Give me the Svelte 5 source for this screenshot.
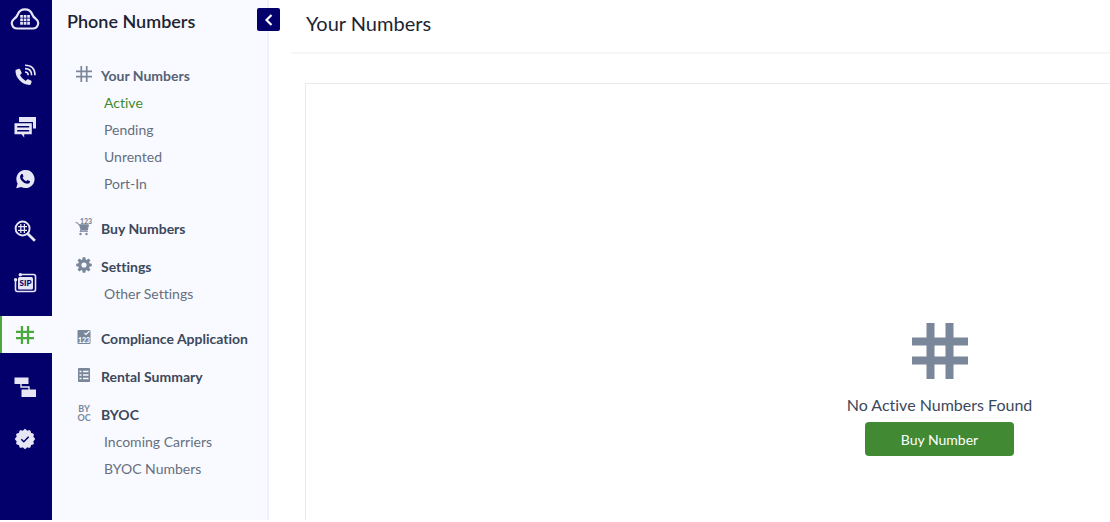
<script>
	let collapsed = $state(false);

	const rail = [
		{ icon: "voice", label: "Voice" },
		{ icon: "messaging", label: "Messaging" },
		{ icon: "whatsapp", label: "WhatsApp" },
		{ icon: "lookup", label: "Lookup" },
		{ icon: "sip", label: "SIP Trunking" },
		{ icon: "hash", label: "Phone Numbers", active: true },
		{ icon: "flow", label: "PHLO" },
		{ icon: "verify", label: "Verify" },
	];

	const menu = [
		{ icon: "hash", label: "Your Numbers", light: true, items: ["Active", "Pending", "Unrented", "Port-In"] },
		{ icon: "cart", label: "Buy Numbers", items: [] },
		{ icon: "gear", label: "Settings", items: ["Other Settings"] },
		{ icon: "compliance", label: "Compliance Application", items: [] },
		{ icon: "table", label: "Rental Summary", items: [] },
		{ icon: "byoc", label: "BYOC", items: ["Incoming Carriers", "BYOC Numbers"] },
	];

	let current = $state("Active");

	// scalloped badge outline, 12 bumps
	const badge = Array.from({ length: 48 }, (_, i) => {
		const a = (i / 48) * Math.PI * 2;
		const r = 9.4 + 0.8 * Math.cos(a * 12);
		return `${(12 + r * Math.cos(a)).toFixed(2)},${(12 + r * Math.sin(a)).toFixed(2)}`;
	}).join(" ");
</script>

{#snippet hash(size, w)}
	<svg width={size} height={size} viewBox="0 0 56 56" fill="none" stroke="currentColor" stroke-width={w} aria-hidden="true">
		<path d="M18.5 0v56M37.5 0v56M0 18.5h56M0 37.5h56" />
	</svg>
{/snippet}

{#snippet railIcon(name)}
	{#if name == "hash"}
		{@render hash(18, 7)}
	{:else}
		<svg width="24" height="24" viewBox="0 0 24 24" fill="currentColor" aria-hidden="true">
			{#if name == "voice"}
				<path d="M3.3 6.7 5.8 5.8q.9-.2 1.3.6l1.5 3.2q.3.7-.3 1.3L6.9 12.1q2 4 5.8 5.9l1.3-1.5q.6-.5 1.3-.2l2.6 1.3q.9.5.7 1.3l-.7 2.2q-.3.9-1.3.9Q10.600 21.600 6.500 17.200 2.400 12.900 2.500 7.700q0-.8.8-1z" />
				<path d="M12 2.200q10 0 10 10M12 5.600q6.600 0 6.600 6.600M12 9q3.200 0 3.200 3.200" fill="none" stroke="currentColor" stroke-width="1.600" />
			{:else if name == "messaging"}
				<path d="M6 2h17v11.400h-3V7H6z" />
				<path fill-rule="evenodd" d="M1.500 8.200h17.300v11h-7.600v3.200L8.500 19.200h-7zM4.200 11v1.400h12V11zm0 4v1.400h12V15z" />
			{:else if name == "whatsapp"}
				<path d="M3.200 21.300 4.600 16.600A9.100 9.100 0 1 1 8.100 20z" />
				<path class="cut" d="m8.400 7.100 1.200-.1.9 2.500-1 1.200q1.300 2.500 3.800 3.600l1.200-1.300 2.500 1.300q.1 2.500-2.800 2.500-3.300-.3-5.700-3.400Q5.600 10 8.400 7.100z" />
			{:else if name == "lookup"}
				<circle cx="9.600" cy="9.500" r="7" fill="none" stroke="currentColor" stroke-width="1.900" />
				<path d="M7.800 5v9M11.400 5v9M5 7.700h9M5 11.300h9" stroke="currentColor" stroke-width="1.300" />
				<path d="m14.700 14.700 7.200 7" stroke="currentColor" stroke-width="2.700" />
			{:else if name == "sip"}
				<path d="M7 3.500h13.500q2 0 2 2V18.500q0 2-2 2H4.500q-2 0-2-2V8.500" fill="none" stroke="currentColor" stroke-width="1.600" />
				<circle cx="7.300" cy="3.700" r="1.700" />
				<circle cx="2.600" cy="8.800" r="1.700" />
				<rect x="5" y="6" width="15" height="12.500" rx="1.500" />
				<text class="cut sip" x="12.500" y="15" text-anchor="middle">SIP</text>
			{:else if name == "flow"}
				<path d="M1.500 2.500H15.500v6.500H1.500zM8.500 14.500h14.500v7.500h-14.500z" />
				<path d="M8 9v3h8v3" fill="none" stroke="currentColor" stroke-width="1.400" />
			{:else if name == "verify"}
				<polygon points={badge} />
				<path class="tick" d="m8.300 12.200 2.500 2.500 4.900-5" />
			{/if}
		</svg>
	{/if}
{/snippet}

{#snippet menuIcon(name)}
	{#if name == "hash"}
		{@render hash(16, 6)}
	{:else if name == "cart"}
		<svg width="18" height="22" viewBox="0 0 18 22" fill="currentColor" aria-hidden="true">
			<text class="num" x="5" y="7.500">123</text>
			<path d="M.5 6.800h2.300l.9 2H13.500l-1.200 5.300H5.700L5 15.300h8" fill="none" stroke="currentColor" />
			<path d="M4 8.800h9.300l-1 5.200H5.600z" />
			<circle cx="5.500" cy="18" r="1.200" />
			<circle cx="11.500" cy="18" r="1.200" />
		</svg>
	{:else}
		<svg width="18" height="18" viewBox="0 0 18 18" fill="currentColor" aria-hidden="true">
			{#if name == "gear"}
				<circle cx="9" cy="9" r="4.200" fill="none" stroke="currentColor" stroke-width="3.200" />
				{#each [0, 45, 90, 135, 180, 225, 270, 315] as angle}
					<path d="m7.200 4 .5-2.800h2.600l.5 2.800z" transform="rotate({angle} 9 9)" />
				{/each}
			{:else if name == "compliance"}
				<rect x="2.500" y="2" width="13" height="14" rx="1" />
				<path d="m9.500 5 1.500 1.500 3.500-3.500" fill="none" stroke="#f9faff" stroke-width="1.200" />
				<text class="num pale" x="9" y="14.500" text-anchor="middle">123</text>
			{:else if name == "table"}
				<rect x="3" y="2" width="12" height="14" rx="1" />
				<path d="M4.500 5.500h2M8 5.500h5.500M4.500 9h2M8 9h5.500M4.500 12.500h2M8 12.500h5.500" stroke="#f9faff" stroke-width="1.600" />
			{/if}
		</svg>
	{/if}
{/snippet}

<div class="page">
	<nav class="rail" aria-label="Products">
		<a class="logo" href="#home" aria-label="Home">
			<svg width="30" height="24" viewBox="0 0 30 24" aria-hidden="true">
				<path d="M7.200 21.500h15.600a5.300 5.300 0 0 0 3-9.700Q23.500 10.500 22.300 7.500A7.800 7.800 0 0 0 7.700 7.500Q6.500 10.500 4.200 11.800A5.300 5.300 0 0 0 7.200 21.500z" fill="none" stroke="currentColor" stroke-width="2.200" />
				<path d="M10.200 8h2.700v2.700h-2.700zM13.700 8h2.700v2.700h-2.700zM17.200 8h2.700v2.700h-2.700zM10.200 11.500h2.700v2.700h-2.700zM13.700 11.500h2.700v2.700h-2.700zM17.200 11.500h2.700v2.700h-2.700zM10.200 15h2.700v2.700h-2.700zM13.700 15h2.700v2.700h-2.700zM17.200 15h2.700v2.700h-2.700z" fill="currentColor" />
			</svg>
		</a>
		{#each rail as item}
			<a class="railItem" class:active={item.active} href={`#${item.icon}`} aria-label={item.label}>
				{@render railIcon(item.icon)}
			</a>
		{/each}
	</nav>

	<aside class="side" class:collapsed>
		<button class="toggle" aria-label="Toggle menu" onclick={() => (collapsed = !collapsed)}>
			<svg width="10" height="12" viewBox="0 0 10 12" fill="none" stroke="currentColor" stroke-width="2.200" aria-hidden="true">
				<path d="M7.500 1 2.500 6l5 5" />
			</svg>
		</button>
		{#if !collapsed}
			<h2>Phone Numbers</h2>
			{#each menu as group}
				<section class:open={group.items.length > 0}>
					<a class="head" class:light={group.light} href="#numbers">
						<span class="icon">
							{#if group.icon == "byoc"}
								<span class="byoc"><span>BY</span><span>OC</span></span>
							{:else}
								{@render menuIcon(group.icon)}
							{/if}
						</span>
						{group.label}
					</a>
					{#each group.items as item}
						<a class="sub" class:current={current == item} href="#numbers" onclick={() => (current = item)}>{item}</a>
					{/each}
				</section>
			{/each}
		{/if}
	</aside>

	<main>
		<header>
			<h1>Your Numbers</h1>
		</header>
		<div class="panel">
			<div class="empty">
				{@render hash(56, 8)}
				<p>No Active Numbers Found</p>
				<button class="buy">Buy Number</button>
			</div>
		</div>
	</main>
</div>

<style>
	:global(body) {
		margin: 0;
		background: #fff;
	}

	.page {
		display: flex;
		height: calc(100vh - 2px);
		overflow: hidden;
		font-family: Lato, "Open Sans", sans-serif;
		font-variant-ligatures: none;
		color: #3c485c;
	}

	h1, h2, p {
		margin: 0;
	}

	a {
		color: inherit;
		text-decoration: none;
	}

	svg {
		display: block;
		flex: none;
	}

	button {
		border: 0;
		padding: 0;
		font-family: inherit;
		color: #fff;
		cursor: pointer;
	}

	.rail {
		flex: none;
		display: flex;
		flex-direction: column;
		gap: 15px;
		width: 52px;
		background: #04006b;
		color: #e6e6f5;
	}

	.logo {
		box-sizing: border-box;
		display: flex;
		justify-content: center;
		align-items: center;
		height: 41px;
		padding: 0 2px 4px 0;
	}

	.railItem {
		box-sizing: border-box;
		display: flex;
		justify-content: center;
		align-items: center;
		height: 37px;
		padding-right: 4px;
		border-left: 2px solid transparent;
	}

	.railItem.active {
		background: #f9faff;
		border-left-color: #4ba83c;
		color: #4ba83c;
	}

	.cut {
		fill: #04006b;
	}

	.sip {
		font-size: 8px;
		font-weight: 900;
	}

	.tick {
		fill: none;
		stroke: #04006b;
		stroke-width: 1.5px;
	}

	.side {
		position: relative;
		box-sizing: border-box;
		flex: none;
		width: 217px;
		background: #f9faff;
		border-right: 2px solid #edf3fe;
	}

	.side.collapsed {
		width: 24px;
	}

	.toggle {
		position: absolute;
		top: 8px;
		right: -13px;
		display: flex;
		justify-content: center;
		align-items: center;
		width: 23px;
		height: 23px;
		background: #04006b;
		border-radius: 2px;
	}

	h2 {
		padding: 9px 15px 0;
		margin-bottom: 29px;
		font-size: 18px;
		line-height: 24px;
		font-weight: 600;
		color: #1c2433;
	}

	section {
		margin-bottom: 11px;
	}

	section.open {
		margin-bottom: 18px;
	}

	.head {
		display: flex;
		align-items: center;
		height: 27px;
		padding-left: 23px;
		font-size: 14px;
		font-weight: 700;
		white-space: nowrap;
	}

	.head.light {
		color: #566174;
	}

	.icon {
		display: flex;
		justify-content: center;
		width: 18px;
		margin-right: 8px;
		padding-bottom: 4px;
		color: #7a869a;
	}

	.sub {
		display: block;
		padding-left: 52px;
		font-size: 14px;
		line-height: 27px;
		color: #666f7e;
	}

	.sub.current {
		color: #3f8a30;
	}

	.num {
		font-size: 7px;
		font-weight: 900;
	}

	.pale {
		fill: #f9faff;
	}

	.byoc {
		display: flex;
		flex-direction: column;
		align-items: center;
		font-size: 9px;
		line-height: 9px;
	}

	main {
		flex: 1;
		min-width: 0;
		display: flex;
		flex-direction: column;
		padding-left: 22px;
		overflow: hidden;
	}

	header {
		padding: 9px 15px 15px;
		border-bottom: 2px solid #f6f6f7;
	}

	h1 {
		font-size: 20px;
		line-height: 28px;
		font-weight: 400;
		color: #1c2433;
	}

	/* wide work area, runs past the right edge on small windows */
	.panel {
		box-sizing: border-box;
		flex: 1;
		min-width: 1269px;
		margin: 29px 0 0 14px;
		border: 1px solid #e9eaee;
		border-bottom: 0;
	}

	.empty {
		display: flex;
		flex-direction: column;
		align-items: center;
		padding-top: 239px;
		color: #7a869a;
	}

	p {
		margin: 14px 0 5px;
		font-size: 16px;
		line-height: 24px;
		color: #3c485c;
	}

	.buy {
		width: 149px;
		height: 34px;
		border-radius: 4px;
		background: #418a33;
		font-size: 14px;
	}
</style>
